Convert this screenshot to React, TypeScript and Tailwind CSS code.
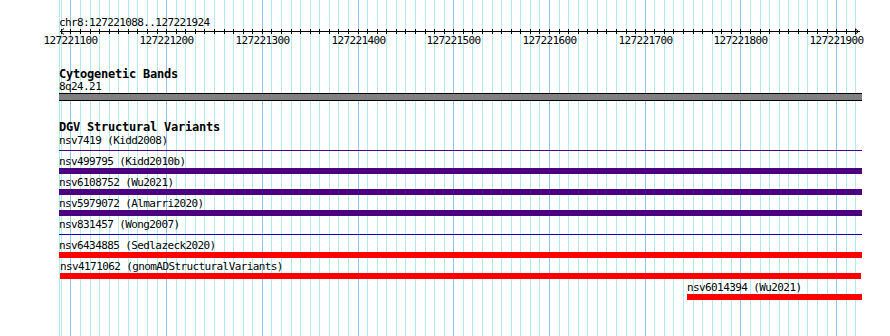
const START = 127221088;
const END = 127221924;
const PX = 0.957;
const x = (bp: number) => 59.5 + (bp - START) * PX;

type Feature = {
  label: string;
  kind: "bar" | "line";
  color: string;
  start: number;
  end: number;
};

const features: Feature[] = [
  { label: "nsv7419 (Kidd2008)", kind: "line", color: "#4b0082", start: START, end: 127221926 },
  { label: "nsv499795 (Kidd2010b)", kind: "bar", color: "#4b0082", start: START, end: 127221926 },
  { label: "nsv6108752 (Wu2021)", kind: "bar", color: "#4b0082", start: START, end: 127221926 },
  { label: "nsv5979072 (Almarri2020)", kind: "bar", color: "#4b0082", start: START, end: 127221926 },
  { label: "nsv831457 (Wong2007)", kind: "line", color: "#0000cd", start: START, end: 127221926 },
  { label: "nsv6434885 (Sedlazeck2020)", kind: "bar", color: "#ff0000", start: START, end: 127221926 },
  { label: "nsv4171062 (gnomADStructuralVariants)", kind: "bar", color: "#ff0000", start: 127221089, end: 127221925 },
  { label: "nsv6014394 (Wu2021)", kind: "bar", color: "#ff0000", start: 127221744, end: 127221926 },
];

const span = (start: number, end: number) => {
  const left = Math.floor(x(start));
  return { left, width: Math.ceil(x(end)) - left };
};

const ticks: number[] = [];
for (let bp = 127221090; bp <= END; bp += 10) ticks.push(bp);

function Grid() {
  return (
    <svg className="absolute inset-0" width={890} height={336} shapeRendering="crispEdges">
      <line x1={59.5} x2={59.5} y1={0} y2={336} stroke="#b0ecf0" />
      {ticks.map((bp) => {
        const xx = Math.floor(x(bp)) + 0.5;
        const major = bp % 100 === 0;
        return (
          <line key={bp} x1={xx} x2={xx} y1={0} y2={336} stroke={major ? "#8cc6ea" : "#b0ecf0"} />
        );
      })}
    </svg>
  );
}

function Ruler() {
  return (
    <svg className="block" width={890} height={7} shapeRendering="crispEdges">
      <line x1={60} x2={860} y1={3.5} y2={3.5} stroke="#000" />
      {ticks.map((bp) => {
        const xx = Math.floor(x(bp)) + 0.5;
        return <line key={bp} x1={xx} x2={xx} y1={1} y2={6} stroke="#000" />;
      })}
      <path d="M64 0.5 L60.5 3.5 L64 6.5" fill="none" stroke="#000" shapeRendering="auto" />
      <path d="M855 0.5 L858.5 3.5 L855 6.5" fill="none" stroke="#000" shapeRendering="auto" />
    </svg>
  );
}

function Track({ f }: { f: Feature }) {
  const s = span(f.start, f.end);
  return (
    <div className="h-[21px]">
      <div className="h-[12px] leading-[12px] whitespace-nowrap" style={{ paddingLeft: s.left }}>
        {f.label}
      </div>
      <div className="h-[6px] flex flex-col justify-center">
        <div
          className={f.kind === "bar" ? "h-[6px]" : "h-px"}
          style={{ marginLeft: s.left, width: s.width, backgroundColor: f.color }}
        />
      </div>
    </div>
  );
}

export default function App() {
  const band = span(START, 127221926);
  return (
    <div className="relative w-[890px] h-[336px] overflow-hidden bg-white text-black text-[11px] tracking-[-0.6px] font-['DejaVu_Sans_Mono','Liberation_Mono',monospace]">
      <Grid />
      <div className="relative flex flex-col pt-[17px]">
        <div className="h-[11px] leading-[12px] pl-[59px]">chr8:127221088..127221924</div>
        <Ruler />
        <div className="relative h-[12px] leading-[12px]">
          {ticks
            .filter((bp) => bp % 100 === 0)
            .map((bp) => (
              <span
                key={bp}
                className="absolute top-0 -translate-x-1/2"
                style={{ left: Math.floor(x(bp)) + 0.5 }}
              >
                {bp}
              </span>
            ))}
        </div>

        <div className="mt-[21px] h-[13px] leading-[13px] pl-[59px] font-bold text-[12px] tracking-[-0.22px]">
          Cytogenetic Bands
        </div>
        <div className="h-[12px] leading-[12px] pl-[59px]">8q24.21</div>
        <div
          className="h-[8px] border-y border-black bg-[#808080]"
          style={{ marginLeft: band.left, width: band.width }}
        />

        <div className="mt-[20px] h-[13px] leading-[13px] pl-[59px] font-bold text-[12px] tracking-[-0.22px]">
          DGV Structural Variants
        </div>
        <div className="mt-px flex flex-col">
          {features.map((f) => (
            <Track key={f.label} f={f} />
          ))}
        </div>
      </div>
    </div>
  );
}
